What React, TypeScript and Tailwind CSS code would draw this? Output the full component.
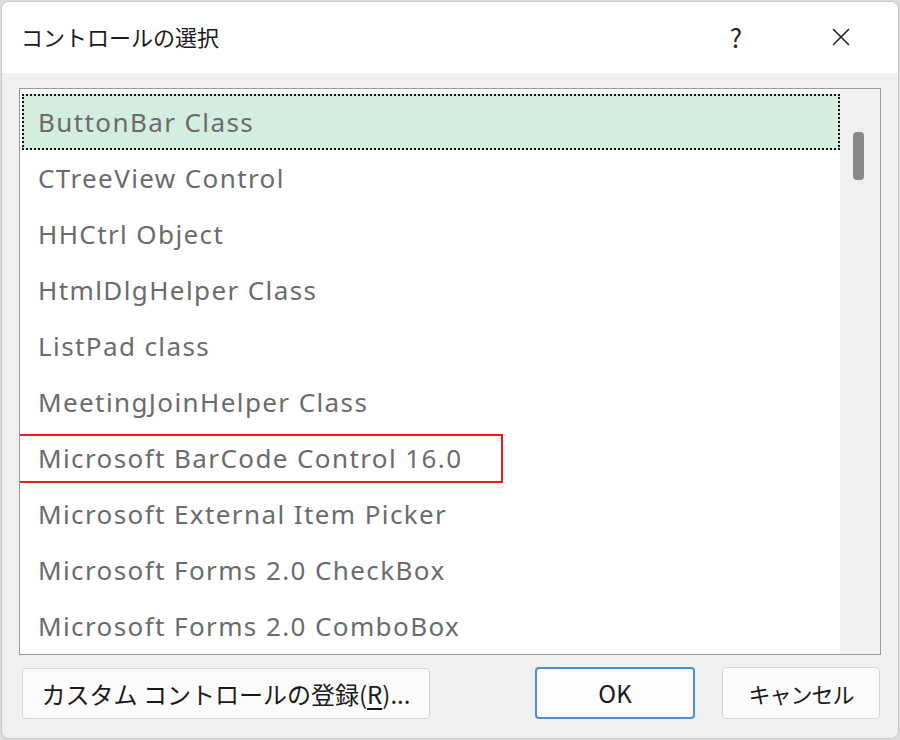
import { X } from 'lucide-react';

const controls = [
  'ButtonBar Class',
  'CTreeView Control',
  'HHCtrl Object',
  'HtmlDlgHelper Class',
  'ListPad class',
  'MeetingJoinHelper Class',
  'Microsoft BarCode Control 16.0',
  'Microsoft External Item Picker',
  'Microsoft Forms 2.0 CheckBox',
  'Microsoft Forms 2.0 ComboBox',
  'Microsoft Forms 2.0 CommandButton',
];

const jp = { fontFamily: '"Noto Sans CJK JP", "Noto Sans", sans-serif' };
const list = { fontFamily: '"Noto Sans", "Open Sans", sans-serif' };

export default function App() {
  return (
    <div className="h-[740px] w-[900px] bg-[#dcdcdc] p-px" style={jp}>
      <div className="flex h-full w-full flex-col overflow-hidden rounded-lg border border-[#c8c8c8] bg-[#f0f0f0]">
        <div className="flex h-[71px] shrink-0 items-center bg-white pl-[19px]">
          <h1 className="-mt-[3px] text-[22px] text-[#1a1a1a]">コントロールの選択</h1>
          <span className="-mt-[2px] ml-auto mr-[84px] text-[26px] text-[#222]">?</span>
          <X className="-mt-[2px] mr-[42px] h-[30px] w-[30px] text-[#222]" strokeWidth={1.3} />
        </div>

        <div className="flex flex-1 flex-col px-[17px] pt-[15px]">
          <div className="flex h-[567px] overflow-hidden border border-[#9a9a9a] bg-white" style={list}>
            <ul className="flex-1 pt-[5px] pl-[2px]">
              {controls.map((name, i) => (
                <li
                  key={name}
                  className={
                    i === 0
                      ? 'flex h-[56px] items-center whitespace-nowrap border-2 border-dotted border-[#111] bg-[#d3eedf] pl-[14px] text-[26px] tracking-[1.4px] text-[#6b6b6b]'
                      : 'flex h-[56px] items-center whitespace-nowrap pl-[16px] text-[26px] tracking-[1.4px] text-[#6b6b6b]'
                  }
                >
                  {i === 6 ? (
                    <span className="-ml-[21px] flex h-[49px] w-[486px] items-center border-2 border-[#ee1c1c] pl-[19px]">
                      {name}
                    </span>
                  ) : (
                    name
                  )}
                </li>
              ))}
            </ul>
            <div className="w-[40px] shrink-0 bg-[#f0f0f0] pl-[13px] pt-[43px]">
              <div className="h-[48px] w-[11px] rounded-sm bg-[#888]" />
            </div>
          </div>

          <div className="mt-[12px] flex items-center">
            <button className="ml-[3px] h-[51px] w-[408px] whitespace-nowrap rounded border border-[#d6d6d6] bg-[#fbfbfb] text-[24px] leading-[49px] text-[#1a1a1a]">
              カスタム コントロールの登録(<span className="underline underline-offset-4">R</span>)...
            </button>
            <button className="ml-auto h-[52px] w-[160px] rounded border-2 border-[#4a90d6] bg-[#fdfdfd] text-[24px] text-[#1a1a1a]">
              OK
            </button>
            <button className="ml-[27px] mr-[1px] h-[52px] w-[158px] whitespace-nowrap rounded border border-[#d6d6d6] bg-[#fbfbfb] text-[22px] tracking-[-1px] text-[#1a1a1a]">
              キャンセル
            </button>
          </div>
        </div>
      </div>
    </div>
  );
}
